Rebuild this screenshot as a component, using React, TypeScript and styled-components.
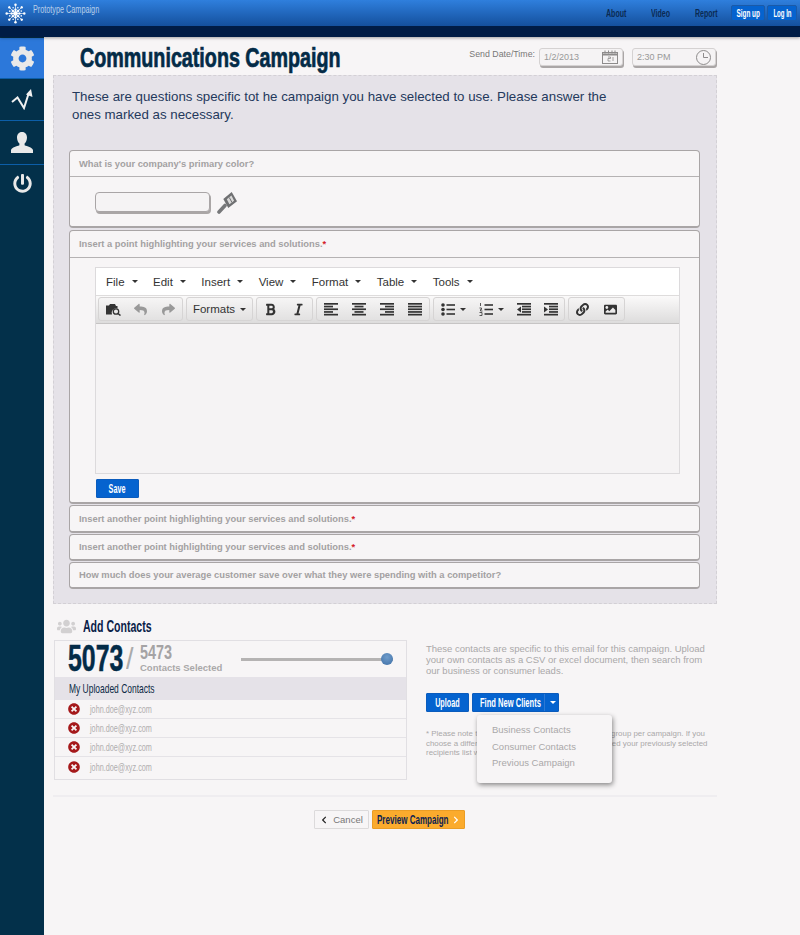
import React from "react";
import styled, { createGlobalStyle } from "styled-components";
import {
  FaBold,
  FaChevronLeft,
  FaChevronRight,
  FaCog,
  FaImage,
  FaItalic,
  FaLink,
  FaPowerOff,
  FaReply,
  FaShare,
  FaTimesCircle,
  FaUsers,
} from "react-icons/fa";

const GlobalStyle = createGlobalStyle`
  html, body {
    margin: 0;
    padding: 0;
    background: #f7f5f6;
    font-family: "Liberation Sans", Arial, sans-serif;
  }
  * { box-sizing: border-box; }
`;

// no condensed face is installed, so the headline text is squeezed sideways
const Cond = styled.span<{ $w?: number; $x?: number; $left?: boolean }>`
  display: inline-block;
  flex: none;
  white-space: nowrap;
  width: ${(p) => (p.$w ? `${p.$w}px` : "auto")};
  transform: scaleX(${(p) => p.$x ?? 0.6});
  transform-origin: ${(p) => (p.$left ? "left" : "center")} center;
`;

const Page = styled.div`
  width: 800px;
  height: 935px;
  overflow: hidden;
  display: flex;
  flex-direction: column;
`;

const Header = styled.header`
  height: 37px;
  flex: none;
  background: #001c45;
  box-shadow: 0 1px 3px rgba(0, 0, 0, 0.35);
  position: relative;
  z-index: 2;
`;

const HeaderBar = styled.div`
  height: 26px;
  background: linear-gradient(#2f7fdd, #14509d);
  display: flex;
  align-items: center;
  padding: 0 3px 0 5px;
`;

const Brand = styled.div`
  font-size: 11px;
  color: #b9cfe9;
  margin: -8px 0 0 7px;
  flex: 1;
`;

const NavLink = styled.a<{ $w: number }>`
  width: ${(p) => p.$w}px;
  font-size: 11px;
  font-weight: 700;
  color: #0b2a52;
`;

const NavButton = styled.a<{ $w: number }>`
  width: ${(p) => p.$w}px;
  height: 16px;
  margin-left: 2px;
  margin-top: -1px;
  background: #0563cf;
  border: 1px solid #1a5aa8;
  border-radius: 2px;
  color: #fff;
  font-size: 11px;
  font-weight: 700;
  display: flex;
  align-items: center;
  justify-content: center;
`;

const Body = styled.div`
  flex: 1;
  display: flex;
  min-height: 0;
`;

const Sidebar = styled.nav`
  width: 44px;
  flex: none;
  background: #03304a;
  padding-top: 1px;
`;

const SideItem = styled.div<{ $h: number; $active?: boolean; $last?: boolean }>`
  height: ${(p) => p.$h}px;
  display: flex;
  align-items: center;
  justify-content: center;
  color: #e9e9e9;
  background: ${(p) => (p.$active ? "#2c78da" : "transparent")};
  border-bottom: ${(p) => (p.$last ? "none" : "1px solid #0c5ea8")};
  font-size: ${(p) => (p.$last ? 19 : 25)}px;
`;

const Main = styled.main`
  width: 673px;
  margin-left: 9px;
  flex: none;
`;

const TitleRow = styled.div`
  width: 664px;
  height: 38px;
  display: flex;
  align-items: flex-start;
  padding: 0 1px 0 27px;
`;

const Title = styled.h1`
  margin: 5px 0 0;
  flex: 1;
  font-size: 27px;
  line-height: 32px;
  font-weight: 700;
  color: #032b47;
  -webkit-text-stroke: 0.7px #032b47;
`;

const SendLabel = styled.span`
  font-size: 8.8px;
  color: #777;
  margin: 12px 4px 0 0;
`;

const DateField = styled.div<{ $w: number }>`
  width: ${(p) => p.$w}px;
  height: 18px;
  margin: 11px 9px 0 0;
  padding: 0 4px;
  display: flex;
  align-items: center;
  justify-content: space-between;
  font-size: 9px;
  color: #999;
  background: #f5f3f4;
  border: 1px solid #d5d2d2;
  border-radius: 3px;
  box-shadow: 1px 2px 0 #aaa6a6;

  &:last-child {
    margin-right: 0;
  }
`;

const Panel = styled.section`
  width: 664px;
  height: 529px;
  background: #e5e2e8;
  border: 1px dashed #d3d0d5;
  padding: 12px 16px 0 15px;
`;

const Intro = styled.p`
  margin: 0 0 26px 3px;
  width: 540px;
  font-size: 13.3px;
  line-height: 18px;
  color: #24395c;
`;

const Question = styled.div<{ $gap?: number }>`
  width: 631px;
  background: #f7f5f6;
  border: 1px solid #a9a5a6;
  border-bottom-width: 2px;
  border-radius: 4px;
  margin-bottom: ${(p) => p.$gap ?? 1}px;
`;

const QuestionHead = styled.div<{ $h: number; $line?: boolean }>`
  height: ${(p) => p.$h}px;
  padding-left: 9px;
  display: flex;
  align-items: center;
  font-size: 9.35px;
  font-weight: 700;
  color: #a3a1a2;
  border-bottom: ${(p) => (p.$line ? "1px solid #b5b2b3" : "none")};
`;

const Required = styled.span`
  color: #d4202a;
`;

const ColorBody = styled.div`
  height: 49px;
  padding: 15px 0 0 25px;
  display: flex;
  align-items: flex-start;
  gap: 7px;
`;

const ColorInput = styled.div`
  width: 115px;
  height: 20px;
  background: #f5f3f4;
  border: 1px solid #a9a5a6;
  border-radius: 4px;
  box-shadow: 1px 2px 0 #aaa6a6;
`;

const EditorWrap = styled.div`
  padding: 9px 19px 4px 25px;
`;

const Editor = styled.div`
  width: 585px;
  height: 207px;
  border: 1px solid #dcdadc;
  display: flex;
  flex-direction: column;
`;

const MenuBar = styled.div`
  height: 28px;
  background: #fff;
  display: flex;
  align-items: center;
  padding-left: 10px;
  gap: 15.5px;
  border-bottom: 1px solid #dedcdc;
`;

const Menu = styled.span`
  display: flex;
  align-items: center;
  gap: 7px;
  font-size: 11.5px;
  color: #333;
`;

const Caret = styled.i`
  width: 0;
  height: 0;
  border: 3px solid transparent;
  border-top: 3px solid #333;
  border-bottom: none;
`;

const ToolBar = styled.div`
  height: 28px;
  padding: 1px 2px;
  display: flex;
  gap: 3px;
  background: linear-gradient(#fbfafa, #dddcdc);
  border-bottom: 1px solid #c6c4c4;
`;

const ToolGroup = styled.div`
  display: flex;
  height: 24px;
  border: 1px solid #d6d4d4;
  border-radius: 3px;
  background: linear-gradient(#f6f5f5, #e2e1e1);
`;

const Tool = styled.span<{ $w?: number; $off?: boolean }>`
  width: ${(p) => p.$w ?? 28}px;
  display: flex;
  align-items: center;
  justify-content: center;
  gap: 5px;
  font-size: 11.5px;
  color: ${(p) => (p.$off ? "#999" : "#333")};
  svg { font-size: 13px; }
`;

const EditArea = styled.div`
  flex: 1;
  background: #f5f3f4;
`;

const BlueButton = styled.button<{ $w: number }>`
  width: ${(p) => p.$w}px;
  height: 19px;
  padding: 0;
  border: 1px solid #0b5cbd;
  border-radius: 1px;
  background: #0563cf;
  color: #fff;
  font-family: inherit;
  font-size: 12px;
  font-weight: 700;
  display: flex;
  align-items: center;
  justify-content: center;
`;

const SaveSlot = styled.div`
  margin: 5px 0 0 1px;
`;

const ContactsHead = styled.div`
  height: 36px;
  padding: 9px 0 0 4px;
  display: flex;
  align-items: center;
  gap: 7px;
  color: #d2d0d1;
  font-size: 19px;
`;

const ContactsTitle = styled.h2`
  margin: 0;
  font-size: 17px;
  font-weight: 700;
  color: #0a2148;
`;

const Columns = styled.div`
  display: flex;
  gap: 19px;
  height: 155px;
  padding-left: 1px;
`;

const Card = styled.div`
  width: 353px;
  height: 140px;
  flex: none;
  border: 1px solid #e1dfe3;
  display: flex;
  flex-direction: column;
`;

const Stats = styled.div`
  height: 36px;
  padding-left: 13px;
  display: flex;
  align-items: center;
`;

const BigCount = styled.span`
  font-size: 36px;
  line-height: 36px;
  font-weight: 700;
  color: #032b47;
  -webkit-text-stroke: 0.5px #032b47;
`;

const Slash = styled.span`
  width: 14px;
  font-size: 30px;
  line-height: 32px;
  color: #aaa;
`;

const TotalBlock = styled.div`
  width: 82px;
  display: flex;
  flex-direction: column;
  margin-top: -3px;
`;

const Total = styled.span`
  font-size: 20px;
  line-height: 19px;
  font-weight: 700;
  color: #a5a3a4;
`;

const TotalLabel = styled.span`
  font-size: 9.5px;
  font-weight: 700;
  line-height: 11px;
  color: #aaa8a9;
  white-space: nowrap;
`;

const Slider = styled.div`
  width: 152px;
  height: 3px;
  margin-left: 19px;
  background: #b5b3b3;
  position: relative;
`;

const Knob = styled.span`
  position: absolute;
  right: 0;
  top: -5px;
  width: 12px;
  height: 12px;
  border-radius: 50%;
  background: radial-gradient(circle at 50% 35%, #6f9ccb, #3e6fa6);
`;

const ListHead = styled.div`
  height: 23px;
  padding-left: 14px;
  display: flex;
  align-items: center;
  background: #e5e2e8;
  font-size: 13px;
  color: #0c2a45;
`;

const ContactRow = styled.div`
  height: 19px;
  padding-left: 13px;
  display: flex;
  align-items: center;
  gap: 10px;
  border-bottom: 1px solid #e5e3e7;
  color: #a5191b;
  font-size: 12px;

  &:last-child {
    border-bottom: none;
  }
`;

const Email = styled.span`
  font-size: 11px;
  color: #b0aeaf;
`;

const Side = styled.div`
  width: 290px;
  padding-top: 3px;
  position: relative;
`;

const SideText = styled.p`
  margin: 0 0 17px;
  font-size: 9.5px;
  line-height: 11px;
  color: #aaa8a9;
`;

const SideButtons = styled.div`
  display: flex;
  gap: 3px;
  margin-bottom: 17px;
`;

const SplitButton = styled(BlueButton)`
  justify-content: flex-start;
  padding-left: 7px;
`;

const SplitCaret = styled.i`
  margin-left: 2px;
  padding-left: 5px;
  height: 17px;
  display: flex;
  align-items: center;
  border-left: 1px solid #2d78d4;

  &::after {
    content: "";
    border: 3px solid transparent;
    border-top: 3px solid #fff;
    border-bottom: none;
  }
`;

const Note = styled.p`
  margin: 0;
  width: 283px;
  font-size: 7.9px;
  line-height: 9.5px;
  color: #aaa8a9;
`;

const Dropdown = styled.div`
  position: absolute;
  left: 51px;
  top: 75px;
  width: 135px;
  height: 68px;
  padding: 7px 15px;
  background: #f7f5f6;
  border-radius: 3px;
  box-shadow: 1px 2px 5px rgba(0, 0, 0, 0.45);
`;

const DropItem = styled.div`
  font-size: 9.5px;
  line-height: 16.5px;
  color: #aaa8a9;
`;

const Footer = styled.div`
  width: 664px;
  border-top: 2px solid #efedf0;
  padding: 13px 0 0 9px;
  display: flex;
  justify-content: center;
  gap: 3px;
`;

const CancelButton = styled.button`
  width: 55px;
  height: 19px;
  padding: 0;
  display: flex;
  align-items: center;
  justify-content: center;
  gap: 5px;
  background: #f7f5f6;
  border: 1px solid #dcdadb;
  border-radius: 1px;
  font-family: inherit;
  font-size: 9.5px;
  color: #777;
  svg { color: #222; font-size: 8px; }
`;

const PreviewButton = styled.button`
  width: 93px;
  height: 19px;
  padding: 0;
  display: flex;
  align-items: center;
  justify-content: center;
  gap: 6px;
  background: #fbab2d;
  border: 1px solid #eb9d24;
  border-radius: 1px;
  font-family: inherit;
  font-size: 12px;
  font-weight: 700;
  color: #0b1f52;
  svg { color: #fff; font-size: 8px; }
`;

const Logo = () => (
  <svg width="21" height="21" viewBox="0 0 22 22" stroke="#fff" strokeWidth="0.7" fill="#fff">
    {[0, 45, 90, 135, 180, 225, 270, 315].map((a) => (
      <g key={a} transform={`rotate(${a} 11 11)`}>
        <line x1="11" y1="11" x2="11" y2="2" />
        <circle cx="11" cy="1.800" r="1.300" stroke="none" />
        <circle cx="11" cy="7" r="1.300" stroke="none" />
        <circle cx="8.500" cy="5" r="0.800" stroke="none" />
      </g>
    ))}
    <circle cx="11" cy="11" r="2.500" stroke="none" />
  </svg>
);

const TrendIcon = () => (
  <svg width="22" height="21" viewBox="0 0 22 21" fill="none" stroke="#f0f0f0" strokeWidth="2">
    <path d="M1 13l5.500-4.500L13 19l4.500-14" />
    <path d="M20 0l1.500 8-6.500-2.500z" fill="#f0f0f0" stroke="none" />
  </svg>
);

const UserIcon = () => (
  <svg width="22" height="24" viewBox="0 0 22 24" fill="#e9e9e9">
    <path d="M11 1c3.400 0 5 2.600 5 5.600 0 2.600-1 4.800-2.400 6v1.600c2.600 1.200 7.400 2 8.400 4.800V22H0v-3c1-2.800 5.800-3.600 8.400-4.800v-1.600C7 11.400 6 9.200 6 6.600 6 3.600 7.600 1 11 1z" />
  </svg>
);

const CalendarIcon = () => (
  <svg width="16" height="14" viewBox="0 0 16 14" fill="none" stroke="#8d8b8b">
    <rect x="0.500" y="2.500" width="15" height="11" />
    <path d="M0.500 4.500h15" strokeWidth="2" />
    <path d="M3 0.500v3M6.500 0.500v3M10 0.500v3M13 0.500v3" />
    <path d="M6 7h2.500v1.500H6V11h2.500M11 7v4" strokeWidth="0.800" />
  </svg>
);

const ClockIcon = () => (
  <svg width="15" height="15" viewBox="0 0 15 15" fill="none" stroke="#8d8b8b">
    <circle cx="7.500" cy="7.500" r="7" />
    <path d="M7.500 3v4.500H12" />
  </svg>
);

const BrushIcon = () => (
  <svg width="21" height="22" viewBox="0 0 21 22">
    <path d="M2 20l6-6.500" stroke="#77787a" strokeWidth="3.600" strokeLinecap="round" />
    <path d="M6.300 7L14.700 0 20 9.300 11.300 16z" fill="#6f7072" />
    <path d="M9.800 7.300l4.600-3.800 2.700 5.200-4.700 3.600z" fill="#d9d8d8" />
    <path d="M12.300 5.500l2.700 5" stroke="#6f7072" />
  </svg>
);

const FolderSearchIcon = () => (
  <svg width="15" height="13" viewBox="0 0 15 13" fill="#333">
    <path d="M0 2.500h3l1-1.500h5l1 2h1.500v2.500a4.500 4.500 0 0 0-5.500 6H0z" />
    <circle cx="10" cy="8.500" r="2.700" fill="none" stroke="#333" strokeWidth="1.300" />
    <path d="M12 10.500l2.500 2" stroke="#333" strokeWidth="1.600" />
  </svg>
);

// five bars as in the editor's align buttons; x/width per bar
const BarsIcon = ({ bars }: { bars: [number, number][] }) => (
  <svg width="14" height="13" viewBox="0 0 14 13" fill="#333">
    {bars.map(([x, w], i) => (
      <rect key={i} x={x} y={i * 2.700} width={w} height="1.700" />
    ))}
  </svg>
);

const IndentIcon = ({ out }: { out?: boolean }) => (
  <svg width="14" height="13" viewBox="0 0 14 13" fill="#333">
    <rect x="0" y="0" width="14" height="1.700" />
    <rect x="5" y="2.700" width="9" height="1.700" />
    <rect x="5" y="5.400" width="9" height="1.700" />
    <rect x="5" y="8.100" width="9" height="1.700" />
    <rect x="0" y="10.800" width="14" height="1.700" />
    <path d={out ? "M4 3.500v6L0 6.500z" : "M0 3.500v6l4-3z"} />
  </svg>
);

const BulletIcon = () => (
  <svg width="14" height="13" viewBox="0 0 14 13" fill="#333">
    {[2, 6.500, 11].map((y) => (
      <g key={y}>
        <circle cx="2" cy={y} r="1.800" />
        <rect x="5.500" y={y - 0.800} width="8.500" height="1.600" />
      </g>
    ))}
  </svg>
);

const NumberIcon = () => (
  <svg width="14" height="13" viewBox="0 0 14 13" fill="#333">
    <path d="M1.500 0v3M0.500 5h2v1.500h-1V8h2M0.500 9.500h2.500v3h-2.500" fill="none" stroke="#333" strokeWidth="0.800" />
    {[2, 6.500, 11].map((y) => (
      <rect key={y} x="5.500" y={y - 0.800} width="8.500" height="1.600" />
    ))}
  </svg>
);

const alignLeft: [number, number][] = [[0, 14], [0, 9], [0, 14], [0, 9], [0, 14]];
const alignCenter: [number, number][] = [[0, 14], [2.500, 9], [0, 14], [2.500, 9], [0, 14]];
const alignRight: [number, number][] = [[0, 14], [5, 9], [0, 14], [5, 9], [0, 14]];
const alignJustify: [number, number][] = [[0, 14], [0, 14], [0, 14], [0, 14], [0, 14]];

const menus = ["File", "Edit", "Insert", "View", "Format", "Table", "Tools"];
const emails = ["john.doe@xyz.com", "john.doe@xyz.com", "john.doe@xyz.com", "john.doe@xyz.com"];
const anotherPoint = "Insert another point highlighting your services and solutions.";

export default function App() {
  return (
    <Page>
      <GlobalStyle />
      <Header>
        <HeaderBar>
          <Logo />
          <Brand><Cond $left $x={0.66}>Prototype Campaign</Cond></Brand>
          <NavLink $w={45}><Cond $left $x={0.64}>About</Cond></NavLink>
          <NavLink $w={44}><Cond $left $x={0.64}>Video</Cond></NavLink>
          <NavLink $w={34}><Cond $left $x={0.64}>Report</Cond></NavLink>
          <NavButton $w={34}><Cond $x={0.58}>Sign up</Cond></NavButton>
          <NavButton $w={30}><Cond $x={0.55}>Log In</Cond></NavButton>
        </HeaderBar>
      </Header>
      <Body>
        <Sidebar>
          <SideItem $h={41} $active><FaCog /></SideItem>
          <SideItem $h={42}><TrendIcon /></SideItem>
          <SideItem $h={44}><UserIcon /></SideItem>
          <SideItem $h={37} $last><FaPowerOff /></SideItem>
        </Sidebar>
        <Main>
          <TitleRow>
            <Title><Cond $left $x={0.73}>Communications Campaign</Cond></Title>
            <SendLabel>Send Date/Time:</SendLabel>
            <DateField $w={84}>1/2/2013<CalendarIcon /></DateField>
            <DateField $w={84}>2:30 PM<ClockIcon /></DateField>
          </TitleRow>
          <Panel>
            <Intro>
              These are questions specific tot he campaign you have selected to use. Please answer the ones marked as necessary.
            </Intro>
            <Question $gap={2}>
              <QuestionHead $h={26} $line>What is your company's primary color?</QuestionHead>
              <ColorBody>
                <ColorInput />
                <BrushIcon />
              </ColorBody>
            </Question>
            <Question>
              <QuestionHead $h={27} $line>
                Insert a point highlighting your services and solutions.<Required>*</Required>
              </QuestionHead>
              <EditorWrap>
                <Editor>
                  <MenuBar>
                    {menus.map((m) => (
                      <Menu key={m}>{m}<Caret /></Menu>
                    ))}
                  </MenuBar>
                  <ToolBar>
                    <ToolGroup>
                      <Tool><FolderSearchIcon /></Tool>
                      <Tool $w={27} $off><FaReply /></Tool>
                      <Tool $off><FaShare /></Tool>
                    </ToolGroup>
                    <ToolGroup>
                      <Tool $w={65}>Formats<Caret /></Tool>
                    </ToolGroup>
                    <ToolGroup>
                      <Tool $w={27}><FaBold /></Tool>
                      <Tool $w={28}><FaItalic /></Tool>
                    </ToolGroup>
                    <ToolGroup>
                      <Tool><BarsIcon bars={alignLeft} /></Tool>
                      <Tool><BarsIcon bars={alignCenter} /></Tool>
                      <Tool><BarsIcon bars={alignRight} /></Tool>
                      <Tool><BarsIcon bars={alignJustify} /></Tool>
                    </ToolGroup>
                    <ToolGroup>
                      <Tool $w={38}><BulletIcon /><Caret /></Tool>
                      <Tool $w={38}><NumberIcon /><Caret /></Tool>
                      <Tool $w={27}><IndentIcon out /></Tool>
                      <Tool $w={27}><IndentIcon /></Tool>
                    </ToolGroup>
                    <ToolGroup>
                      <Tool $w={27}><FaLink /></Tool>
                      <Tool $w={28}><FaImage /></Tool>
                    </ToolGroup>
                  </ToolBar>
                  <EditArea />
                </Editor>
                <SaveSlot><BlueButton $w={43}><Cond>Save</Cond></BlueButton></SaveSlot>
              </EditorWrap>
            </Question>
            <Question>
              <QuestionHead $h={25}>{anotherPoint}<Required>*</Required></QuestionHead>
            </Question>
            <Question>
              <QuestionHead $h={24}>{anotherPoint}<Required>*</Required></QuestionHead>
            </Question>
            <Question>
              <QuestionHead $h={24}>How much does your average customer save over what they were spending with a competitor?</QuestionHead>
            </Question>
          </Panel>
          <ContactsHead>
            <FaUsers />
            <ContactsTitle><Cond $left $x={0.62}>Add Contacts</Cond></ContactsTitle>
          </ContactsHead>
          <Columns>
            <Card>
              <Stats>
                <BigCount><Cond $left $w={58} $x={0.69}>5073</Cond></BigCount>
                <Slash><Cond $left $x={0.9}>/</Cond></Slash>
                <TotalBlock>
                  <Total><Cond $left $x={0.72}>5473</Cond></Total>
                  <TotalLabel>Contacts Selected</TotalLabel>
                </TotalBlock>
                <Slider><Knob /></Slider>
              </Stats>
              <ListHead><Cond $left $x={0.65}>My Uploaded Contacts</Cond></ListHead>
              {emails.map((email, i) => (
                <ContactRow key={i}>
                  <FaTimesCircle />
                  <Email><Cond $left $x={0.66}>{email}</Cond></Email>
                </ContactRow>
              ))}
            </Card>
            <Side>
              <SideText>
                These contacts are specific to this email for this campaign. Upload your own contacts as a CSV or excel document, then search from our business or consumer leads.
              </SideText>
              <SideButtons>
                <BlueButton $w={43}><Cond>Upload</Cond></BlueButton>
                <SplitButton $w={87}>
                  <Cond $left $w={62} $x={0.63}>Find New Clients</Cond>
                  <SplitCaret />
                </SplitButton>
              </SideButtons>
              <Note>
                * Please note that you can only select one recipients group per campaign. If you choose a different contact group, you will have replaced your previously selected recipients list when you return.
              </Note>
              <Dropdown>
                <DropItem>Business Contacts</DropItem>
                <DropItem>Consumer Contacts</DropItem>
                <DropItem>Previous Campaign</DropItem>
              </Dropdown>
            </Side>
          </Columns>
          <Footer>
            <CancelButton><FaChevronLeft />Cancel</CancelButton>
            <PreviewButton>
              <Cond $left $w={69} $x={0.67}>Preview Campaign</Cond>
              <FaChevronRight />
            </PreviewButton>
          </Footer>
        </Main>
      </Body>
    </Page>
  );
}
